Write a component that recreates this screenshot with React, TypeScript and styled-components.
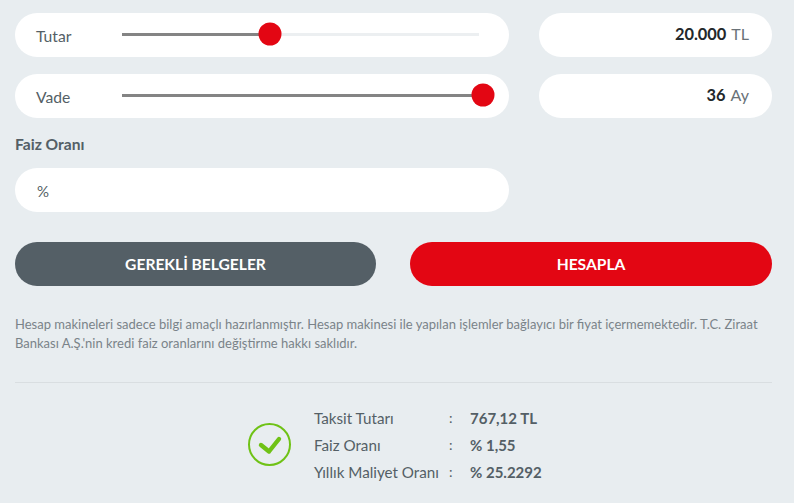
import React from "react";
import styled, { createGlobalStyle } from "styled-components";

const Global = createGlobalStyle`
  html, body { margin: 0; padding: 0; background: #e8edf0; }
  body { font-family: Lato, "Noto Sans", "Liberation Sans", sans-serif; color: #545f66; }
`;

const Page = styled.div`
  width: 794px;
  height: 503px;
  box-sizing: border-box;
  padding: 13px 22px 0 15px;
  overflow: hidden;
  background: #e8edf0;
`;

const SliderGrid = styled.div`
  display: grid;
  grid-template-columns: 494px 233px;
  column-gap: 30px;
  row-gap: 17px;
`;

const Pill = styled.div`
  height: 44px;
  border-radius: 22px;
  background: #fff;
  display: flex;
  align-items: center;
  box-sizing: border-box;
`;

const SliderPill = styled(Pill)`
  padding: 0 30px 0 21px;
`;

const SliderLabel = styled.span`
  width: 86px;
  font-size: 15.7px;
  color: #545f66;
  padding-top: 1px;
`;

const Track = styled.div`
  position: relative;
  width: 357px;
  height: 3px;
  margin-top: -1px;
  background: #eceff1;
`;

const Fill = styled.div`
  height: 100%;
  background: #848484;
`;

const Thumb = styled.div`
  position: absolute;
  top: calc(50% - 1px);
  width: 23px;
  height: 23px;
  border-radius: 50%;
  background: #e30613;
  transform: translate(-50%, -50%);
`;

const ValuePill = styled(Pill)`
  justify-content: flex-end;
  align-items: baseline;
  padding: 11px 23px 0 0;
  font-size: 16px;
  gap: 5px;
  color: #6a7278;
`;

const Value = styled.b`
  font-size: 16.4px;
  font-weight: 700;
  color: #23282b;
`;

const FieldLabel = styled.div`
  margin-top: 18px;
  height: 17px;
  line-height: 17px;
  font-size: 15.6px;
  font-weight: 700;
  color: #545f66;
`;

const RateInput = styled(Pill)`
  width: 494px;
  margin-top: 15px;
  padding: 2px 0 0 22px;
  font-size: 15px;
  color: #545f66;
`;

const Buttons = styled.div`
  display: grid;
  grid-template-columns: 361px 362px;
  column-gap: 34px;
  margin-top: 30px;
`;

const Button = styled.button<{ $primary?: boolean }>`
  height: 44px;
  border: 0;
  border-radius: 22px;
  padding: 0;
  font-family: inherit;
  font-size: 15.6px;
  font-weight: 700;
  color: #fff;
  background: ${(p) => (p.$primary ? "#e30613" : "#545f66")};
`;

const Note = styled.p`
  margin: 29px 0 0;
  font-size: 13px;
  line-height: 19px;
  color: #7a8389;
`;

const Divider = styled.hr`
  margin: 29px 0 0;
  border: 0;
  border-top: 1px solid #d9dee1;
`;

const Result = styled.div`
  display: flex;
  align-items: center;
  margin-top: 21px;
  padding-left: 233px;
  gap: 23px;
`;

const ResultGrid = styled.div`
  display: grid;
  grid-template-columns: 135px 21px auto;
  grid-auto-rows: 27px;
  align-items: center;
  font-size: 15.2px;
`;

const Colon = styled.span`
  font-size: 14px;
`;

const ResultValue = styled.b`
  font-size: 15px;
  font-weight: 700;
`;

const CheckIcon = styled.svg`
  flex: none;
`;

const rows = [
  ["Taksit Tutarı", "767,12 TL"],
  ["Faiz Oranı", "% 1,55"],
  ["Yıllık Maliyet Oranı", "% 25.2292"],
];

export default function App() {
  return (
    <Page>
      <Global />
      <SliderGrid>
        <SliderPill>
          <SliderLabel>Tutar</SliderLabel>
          <Track>
            <Fill style={{ width: "41.4%" }} />
            <Thumb style={{ left: "41.4%" }} />
          </Track>
        </SliderPill>
        <ValuePill>
          <Value>20.000</Value> TL
        </ValuePill>
        <SliderPill>
          <SliderLabel>Vade</SliderLabel>
          <Track>
            <Fill style={{ width: "100%" }} />
            <Thumb style={{ left: "101%" }} />
          </Track>
        </SliderPill>
        <ValuePill>
          <Value>36</Value> Ay
        </ValuePill>
      </SliderGrid>
      <FieldLabel>Faiz Oranı</FieldLabel>
      <RateInput>%</RateInput>
      <Buttons>
        <Button>GEREKLİ BELGELER</Button>
        <Button $primary>HESAPLA</Button>
      </Buttons>
      <Note>
        Hesap makineleri sadece bilgi amaçlı hazırlanmıştır. Hesap makinesi ile yapılan işlemler bağlayıcı bir fiyat içermemektedir. T.C. Ziraat
        <br />
        Bankası A.Ş.'nin kredi faiz oranlarını değiştirme hakkı saklıdır.
      </Note>
      <Divider />
      <Result>
        <CheckIcon width="43" height="43" viewBox="0 0 43 43" fill="none">
          <circle cx="21.5" cy="21.5" r="20.5" stroke="#6fc216" strokeWidth="2" />
          <path d="M13 22l8 6.5L31 16" stroke="#6fc216" strokeWidth="4.4" strokeLinecap="round" strokeLinejoin="round" />
        </CheckIcon>
        <ResultGrid>
          {rows.map(([k, v]) => (
            <React.Fragment key={k}>
              <span>{k}</span>
              <Colon>:</Colon>
              <ResultValue>{v}</ResultValue>
            </React.Fragment>
          ))}
        </ResultGrid>
      </Result>
    </Page>
  );
}
